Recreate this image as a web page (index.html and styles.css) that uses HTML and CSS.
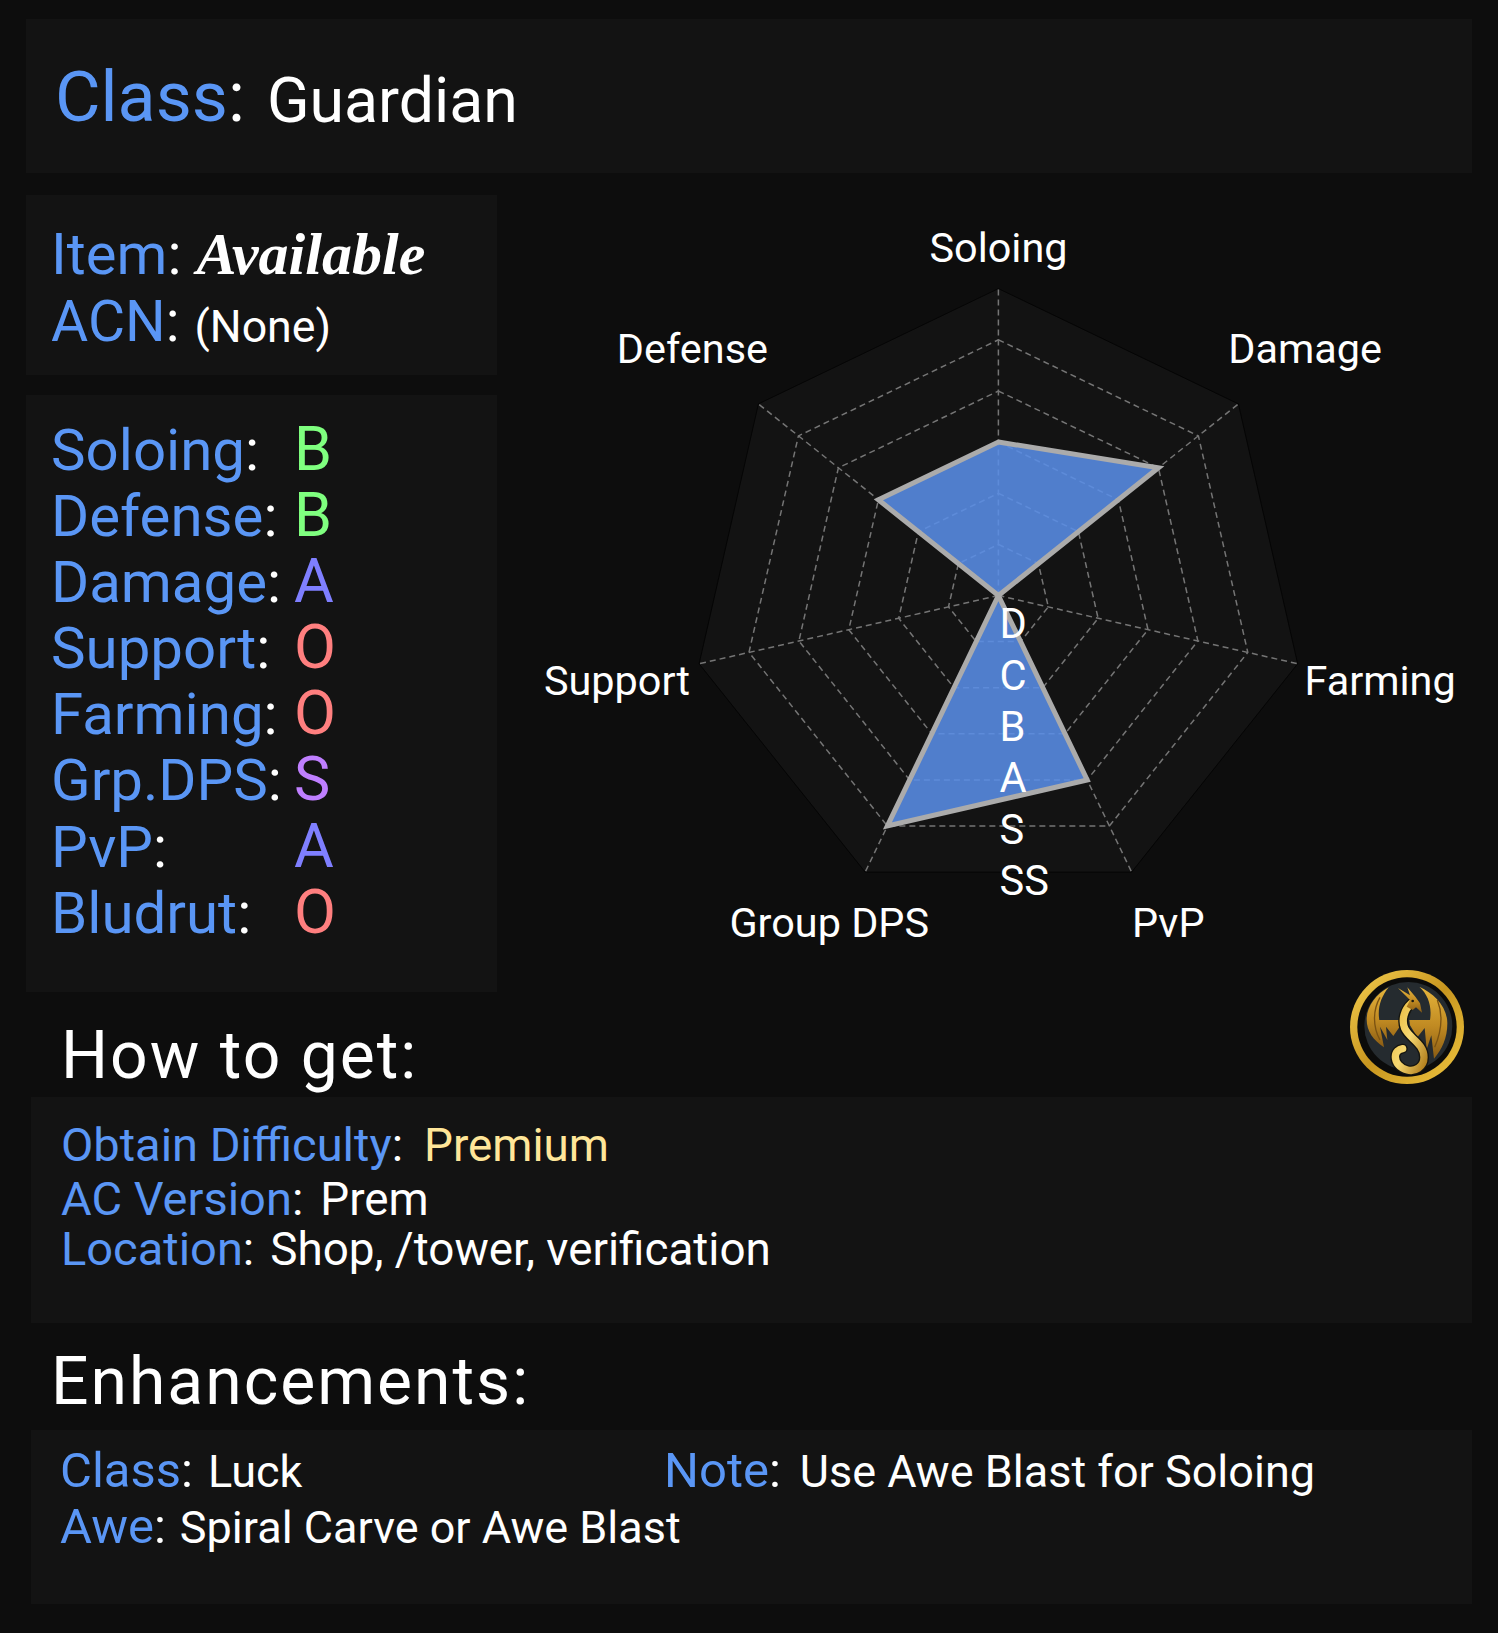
FILE: index.html
```html
<!DOCTYPE html>
<html lang="en">
<head>
<meta charset="utf-8">
<title>Guardian</title>
<link rel="stylesheet" href="styles.css">
</head>
<body>
<main class="page">
  <section class="panel class-panel">
    <span class="label class-label">Class</span><span class="colon class-colon">:</span>
    <span class="class-value">Guardian</span>
  </section>

  <div class="mid">
    <div class="left">
      <section class="panel item-panel">
        <div class="item-row"><span class="label">Item</span><span class="colon">:</span><span class="fancy">Available</span></div>
        <div class="acn-row"><span class="label">ACN</span><span class="colon">:</span><span class="none">(None)</span></div>
      </section>
      <section class="panel stats-panel">
        <div class="stat"><span><span class="label">Soloing</span><span class="colon">:</span></span><span class="grade g-b">B</span></div>
        <div class="stat"><span><span class="label">Defense</span><span class="colon">:</span></span><span class="grade g-b">B</span></div>
        <div class="stat"><span><span class="label">Damage</span><span class="colon">:</span></span><span class="grade g-a">A</span></div>
        <div class="stat"><span><span class="label">Support</span><span class="colon">:</span></span><span class="grade g-o">O</span></div>
        <div class="stat"><span><span class="label">Farming</span><span class="colon">:</span></span><span class="grade g-o">O</span></div>
        <div class="stat"><span><span class="label">Grp.DPS</span><span class="colon">:</span></span><span class="grade g-s">S</span></div>
        <div class="stat"><span><span class="label">PvP</span><span class="colon">:</span></span><span class="grade g-a">A</span></div>
        <div class="stat"><span><span class="label">Bludrut</span><span class="colon">:</span></span><span class="grade g-o">O</span></div>
      </section>
    </div>

    <svg class="radar" viewBox="497 195 1001 797" width="1001" height="797" aria-label="Radar chart">
      <polygon class="r-bg" points="998.4,288.6 1238.4,403.9 1297.7,663.8 1131.6,872.1 865.2,872.1 699.1,663.8 758.4,403.9"/>
      <g class="r-grid">
        <polygon points="998.4,544.4 1038.4,563.6 1048.3,606.9 1020.6,641.6 976.2,641.6 948.5,606.9 958.4,563.6"/>
        <polygon points="998.4,493.3 1078.4,531.7 1098.1,618.3 1042.8,687.7 954,687.7 898.7,618.3 918.4,531.7"/>
        <polygon points="998.4,442 1118.4,499.8 1148,629.7 1065,733.8 931.8,733.8 848.8,629.7 878.4,499.8"/>
        <polygon points="998.4,391 1158.4,467.8 1197.9,641 1087.2,779.9 909.6,779.9 798.9,641 838.4,467.8"/>
        <polygon points="998.4,339.8 1198.4,435.9 1247.8,652.4 1109.4,826 887.4,826 749,652.4 798.4,435.9"/>
        <line x1="998.4" y1="595.5" x2="998.4" y2="288.6"/>
        <line x1="998.4" y1="595.5" x2="1238.4" y2="403.9"/>
        <line x1="998.4" y1="595.5" x2="1297.7" y2="663.8"/>
        <line x1="998.4" y1="595.5" x2="1131.6" y2="872.1"/>
        <line x1="998.4" y1="595.5" x2="865.2" y2="872.1"/>
        <line x1="998.4" y1="595.5" x2="699.1" y2="663.8"/>
        <line x1="998.4" y1="595.5" x2="758.4" y2="403.9"/>
      </g>
      <polygon class="r-data" points="998.4,442 1158.4,467.8 998.4,595.5 1087.2,779.9 887.4,826 998.4,595.5 878.4,499.8"/>
      <g class="r-ticks">
        <text x="999.5" y="638">D</text>
        <text x="999.5" y="690">C</text>
        <text x="999.5" y="741">B</text>
        <text x="999.5" y="792">A</text>
        <text x="999.5" y="844">S</text>
        <text x="999.5" y="895">SS</text>
      </g>
      <g class="r-labels">
        <text x="998.5" y="262" text-anchor="middle">Soloing</text>
        <text x="1382" y="363" text-anchor="end">Damage</text>
        <text x="1304.5" y="695">Farming</text>
        <text x="1204.5" y="937" text-anchor="end">PvP</text>
        <text x="929" y="937" text-anchor="end">Group DPS</text>
        <text x="690" y="695" text-anchor="end">Support</text>
        <text x="768" y="363" text-anchor="end">Defense</text>
      </g>
    </svg>
  </div>

  <h2 class="how-title">How to get:</h2>
  <section class="panel how-panel">
    <div class="how-row row-a"><span class="label">Obtain Difficulty</span><span class="colon">:</span><span class="value premium">Premium</span></div>
    <div class="how-row row-b"><span class="label">AC Version</span><span class="colon">:</span><span class="value val-b">Prem</span></div>
    <div class="how-row row-c"><span class="label">Location</span><span class="colon">:</span><span class="value val-c">Shop, /tower, verification</span></div>
  </section>

  <h2 class="enh-title">Enhancements:</h2>
  <section class="panel enh-panel">
    <div class="enh-grid">
      <div class="enh-a"><span class="label">Class</span><span class="colon">:</span><span class="value val-d">Luck</span></div>
      <div class="enh-note"><span class="label">Note</span><span class="colon">:</span><span class="value val-e">Use Awe Blast for Soloing</span></div>
      <div class="enh-b"><span class="label">Awe</span><span class="colon">:</span><span class="value val-f">Spiral Carve or Awe Blast</span></div>
    </div>
  </section>

  <svg class="logo" viewBox="60 30 342 342" width="114" height="114" aria-label="Dragon emblem">
    <defs>
      <linearGradient id="ringG" x1="0" y1="0" x2="1" y2="1">
        <stop offset="0" stop-color="#f4cf50"/>
        <stop offset=".5" stop-color="#c8961f"/>
        <stop offset="1" stop-color="#f0c640"/>
      </linearGradient>
      <linearGradient id="goldG" x1="0" y1="0" x2="0" y2="1">
        <stop offset="0" stop-color="#e6b53c"/>
        <stop offset=".55" stop-color="#c08a22"/>
        <stop offset="1" stop-color="#8a5c14"/>
      </linearGradient>
      <linearGradient id="bodyG" x1="0" y1="0" x2="1" y2="1">
        <stop offset="0" stop-color="#e8b93c"/>
        <stop offset=".5" stop-color="#f6d871"/>
        <stop offset="1" stop-color="#b17e1c"/>
      </linearGradient>
    </defs>
    <circle cx="231" cy="201" r="171" fill="url(#ringG)"/>
    <circle cx="231" cy="201" r="149" fill="#0b0b0a"/>
    <circle cx="235" cy="198" r="132" fill="#252b2f"/>
    <path fill="url(#goldG)" d="M176 82C138 102 110 140 110 178C110 215 130 240 162 262L150 200L172 240L168 200L190 228L212 196L215 180L148 180C142 145 152 112 176 82Z"/>
    <path fill="url(#goldG)" d="M268 80C312 100 352 140 352 190C352 235 336 268 312 296L304 226L290 268L284 204L262 232L240 196L238 180L300 180C306 140 296 106 268 80Z"/>
    <path class="logo-rib" d="M150 112C128 150 128 200 150 240M322 120C338 160 336 210 314 262"/>
    <path class="logo-gap" d="M244 130C222 150 214 180 224 205C238 236 282 250 282 292C282 322 254 336 232 330C208 324 196 306 196 290C196 276 206 268 218 266"/>
    <path class="logo-body" d="M244 130C222 150 214 180 224 205C238 236 282 250 282 292C282 322 254 336 232 330C208 324 196 306 196 290C196 276 206 268 218 266"/>
    <path fill="url(#goldG)" d="M204 84L240 106L232 82L256 110L270 130L276 158L258 142L248 150L230 140L240 120Z"/>
    <circle cx="248" cy="123" r="4" fill="#1a1a12"/>
  </svg>
</main>
</body>
</html>
```
FILE: styles.css
```css
* { box-sizing: border-box; }
html, body { margin: 0; padding: 0; background: #0d0d0d; }
body { font-family: Roboto, "Liberation Sans", sans-serif; color: #fff; }
.page { position: relative; width: 1498px; height: 1633px; padding: 19px 26px 0; overflow: hidden; }
.panel { background: #131313; }
.label { color: #5a96f5; }
.colon { color: #fff; }

.class-panel { height: 154px; padding: 41px 29px 0; display: flex; align-items: baseline; }
.class-label, .class-colon { font-size: 70px; line-height: 75px; }
.class-value { font-size: 62.6px; line-height: 75px; margin-left: 22px; position: relative; top: 1px; }

.mid { display: flex; margin-top: 22px; height: 797px; }
.left { width: 471px; flex: none; display: flex; flex-direction: column; gap: 20px; }
.radar { display: block; flex: none; }

.item-panel { height: 180px; padding: 26px 25px 0; }
.item-row, .acn-row { display: flex; align-items: baseline; line-height: 66px; }
.item-row { font-size: 58px; height: 68px; }
.acn-row { font-size: 57px; height: 66px; }
.fancy { font-family: "Liberation Serif", serif; font-style: italic; font-weight: bold; font-size: 60px; margin-left: 15px; }
.none { font-size: 44.7px; margin-left: 15px; position: relative; top: 1px; }

.stats-panel { flex: 1; padding: 20.5px 25px 0; }
.stat { display: grid; grid-template-columns: 244px auto; align-items: baseline; font-size: 58.2px; line-height: 66.2px; height: 66.2px; }
.grade { font-size: 61px; margin-left: -1px; }
.g-b { color: #7fff7f; }
.g-a { color: #7f7fff; }
.g-o { color: #ff7f7f; }
.g-s { color: #bf7fff; }

.how-title { margin: 0 0 0 35px; height: 105px; padding-top: 29px; font-size: 66px; line-height: 70px; font-weight: 400; letter-spacing: 2px; }
.how-panel { margin-left: 5px; height: 226px; padding: 22px 30px 0; font-size: 47px; }
.how-row { display: flex; align-items: baseline; line-height: 52px; }
.value { font-size: 45.8px; }
.row-a { height: 54px; }
.row-b { height: 50px; }
.row-c { height: 50px; }
.premium { color: #ffe699; margin-left: 21px; }
.val-b { margin-left: 17px; }
.val-c { margin-left: 16px; }

.enh-title { margin: 0 0 0 25px; height: 107px; padding-top: 23px; font-size: 66px; line-height: 72px; font-weight: 400; letter-spacing: 2px; }
.enh-panel { margin-left: 5px; height: 174px; padding: 13px 29px 0; font-size: 49px; }
.enh-grid { display: grid; grid-template-columns: 604px auto; line-height: 55px; }
.enh-b { grid-column: 1 / 3; }
.enh-panel .value { font-size: 45px; }
.enh-panel .val-d { margin-left: 15px; }
.enh-panel .val-e { margin-left: 19px; }
.enh-panel .val-f { margin-left: 14px; }

.r-bg { fill: #131313; stroke: #050505; stroke-width: 1; }
.r-grid polygon, .r-grid line { fill: none; stroke: #757575; stroke-width: 1.5; stroke-dasharray: 6 4; }
.r-data { fill: #5a8ee8; fill-opacity: .87; stroke: #ababab; stroke-width: 5; stroke-linejoin: miter; }
.r-ticks text { fill: #fff; font-size: 41.6px; }
.r-labels text { fill: #fff; font-size: 41.4px; }

.logo { position: absolute; left: 1350px; top: 970px; }
.logo-rib { fill: none; stroke: #7a5212; stroke-width: 4; }
.logo-gap { fill: none; stroke: #14140f; stroke-width: 30; stroke-linecap: round; }
.logo-body { fill: none; stroke: url(#bodyG); stroke-width: 22; stroke-linecap: round; }
```
